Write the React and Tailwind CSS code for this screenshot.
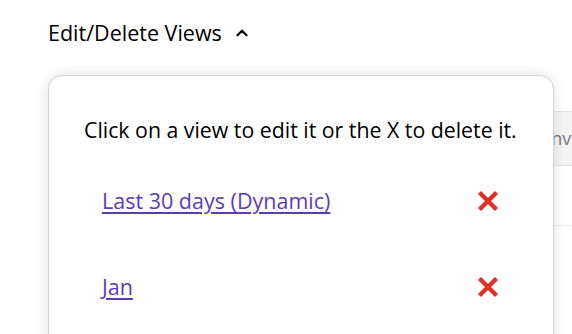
import { ChevronUp } from "lucide-react";

const views = [
    { id: 1, name: "Last 30 days (Dynamic)" },
    { id: 2, name: "Jan" },
];

const RedX = () => (
    <svg width="24" height="24" viewBox="0 0 24 24" aria-label="delete">
        <path d="M3.5 3.5 L20.5 20.5 M20.5 3.5 L3.5 20.5" stroke="#dd3222" strokeWidth="4.4" strokeLinecap="butt" />
    </svg>
);

const App = () => {
    return (
        <div className="relative h-[334px] w-[572px] overflow-hidden bg-white font-['Open_Sans',sans-serif] text-black">
            {/* table behind the dropdown */}
            <div className="absolute left-[300px] top-[111px] w-[400px] border-t border-[#e2e2e2]">
                <div className="flex h-[54px] items-center border-b border-[#e2e2e2] bg-[#f4f4f4] pl-[229px] text-[18px] text-[#777]">
                    Conversions
                </div>
                <div className="h-[60px] border-b border-[#eeeeee]"></div>
            </div>

            <div className="relative pl-[48px] pt-[19px]">
                <button className="flex items-center gap-[11px] text-[21.5px] leading-[28px]">
                    Edit/Delete Views
                    <ChevronUp size={18} strokeWidth={3} />
                </button>
            </div>

            <div className="absolute left-[48px] top-[75px] w-[506px] h-[300px] rounded-[14px] border border-[#d4d4d4] bg-white shadow-[0_0_14px_rgba(0,0,0,0.12)] px-[35px] pt-[40px]">
                <p className="text-[21.3px] leading-[28px]">Click on a view to edit it or the X to delete it.</p>
                <div className="mt-[29px] flex flex-col">
                    {views.map(view => (
                        <div key={view.id} className="flex h-[86px] items-center justify-between pl-[18px] pr-[18px]">
                            <a href="#" className="text-[21.5px] leading-[28px] text-[#5b3cb8] underline underline-offset-[3px] -mt-[30px]">{view.name}</a>
                            <div className="-mt-[30px]"><RedX /></div>
                        </div>
                    ))}
                </div>
            </div>
        </div>
    );
};

export default App;
